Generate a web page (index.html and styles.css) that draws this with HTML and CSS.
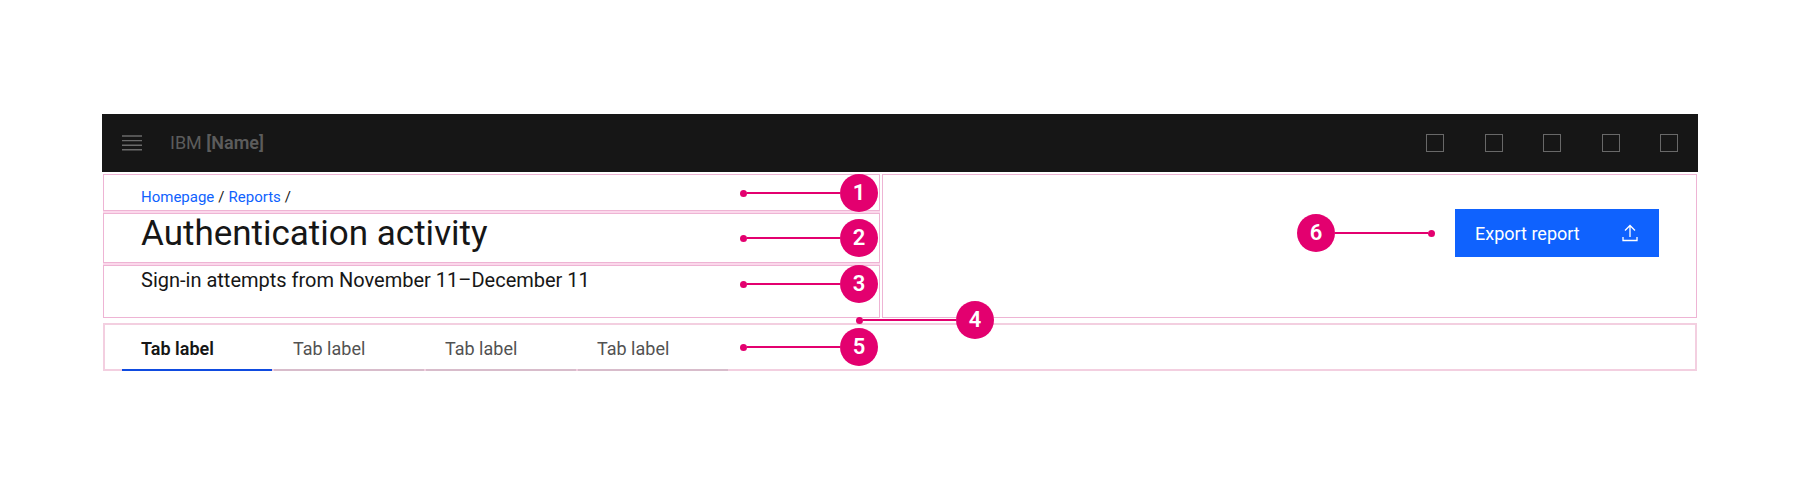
FILE: index.html
```
<!DOCTYPE html>
<html lang="en">
<head>
<meta charset="utf-8">
<title>Authentication activity</title>
<link rel="stylesheet" href="styles.css">
</head>
<body>
<main class="page">
  <header class="shell">
    <button class="menu" aria-label="Menu">
      <svg width="20" height="16" viewBox="0 0 20 16"><path d="M0 1h20M0 5.600h20M0 10.200h20M0 14.800h20" stroke="currentColor" stroke-width="1.400"/></svg>
    </button>
    <a class="brand" href="#">IBM <b>[Name]</b></a>
    <div class="actions">
      <button class="action" aria-label="Action 1"></button>
      <button class="action" aria-label="Action 2"></button>
      <button class="action" aria-label="Action 3"></button>
      <button class="action" aria-label="Action 4"></button>
      <button class="action" aria-label="Action 5"></button>
    </div>
  </header>

  <section class="top">
    <div class="left">
      <nav class="zone crumbs" aria-label="Breadcrumb">
        <a href="#">Homepage</a><span>/</span><a href="#">Reports</a><span>/</span>
        <div class="note"><i class="dot"></i><i class="line"></i><span class="num">1</span></div>
      </nav>
      <div class="zone title">
        <h1>Authentication activity</h1>
        <div class="note"><i class="dot"></i><i class="line"></i><span class="num">2</span></div>
      </div>
      <div class="zone desc">
        <p>Sign-in attempts from November 11–December 11</p>
        <div class="note"><i class="dot"></i><i class="line"></i><span class="num">3</span></div>
      </div>
    </div>
    <div class="zone right">
      <div class="note reverse"><i class="dot"></i><i class="line"></i><span class="num">6</span></div>
      <button class="export">Export report
        <svg width="18" height="18" viewBox="0 0 18 18"><path d="M9 13V1.500M4 6.500l5-5 5 5M2 13v3.500h14V13" fill="none" stroke="currentColor" stroke-width="1.300"/></svg>
      </button>
    </div>
  </section>

  <section class="zone tabs">
    <div class="tablist" role="tablist">
      <button class="tab selected" role="tab" aria-selected="true">Tab label</button>
      <button class="tab" role="tab" aria-selected="false">Tab label</button>
      <button class="tab" role="tab" aria-selected="false">Tab label</button>
      <button class="tab" role="tab" aria-selected="false">Tab label</button>
    </div>
    <div class="note tabs-note"><i class="dot"></i><i class="line"></i><span class="num">5</span></div>
    <div class="note gap-note"><i class="dot"></i><i class="line"></i><span class="num">4</span></div>
  </section>
</main>
</body>
</html>
```
FILE: styles.css
```
* { box-sizing: border-box; }
body {
  margin: 0;
  background: #fff;
  color: #161616;
  font-family: Roboto, "Noto Sans", sans-serif;
}
button { font: inherit; border: 0; padding: 0; background: none; }
a { text-decoration: none; }
svg { display: block; }

.page { padding: 114px 102px; }

.shell {
  display: flex;
  align-items: center;
  height: 58px;
  padding: 0 20px;
  background: #161616;
  color: #5c5c5c;
}
.menu { color: #6a6a6a; }
.brand { margin-left: 28px; color: inherit; font-size: 18px; line-height: 24px; }
.brand b { font-weight: 600; }
.actions {
  display: flex;
  justify-content: space-between;
  width: 252px;
  margin-left: auto;
}
.action { width: 18px; height: 18px; border: 1px solid #686868; }

.zone { position: relative; border: 1px solid #eeb4d4; }

.top {
  display: grid;
  grid-template-columns: 777fr 815fr;
  gap: 2px;
  margin: 2px 1px 0;
}
.left { display: grid; gap: 2px; background: #fbd8eb; }
.left .zone { padding-left: 37px; background: #fff; }

.crumbs {
  display: flex;
  gap: 4px;
  padding-top: 12px;
  height: 37px;
  font-size: 15px;
  line-height: 20px;
}
.crumbs a { color: #0f62fe; }
.title { height: 50px; }
.title h1 { margin: 0; font-size: 35px; font-weight: 400; line-height: 40px; }
.desc { height: 53px; }
.desc p { margin: 0; padding-top: 2px; font-size: 20px; line-height: 24px; }

.right {
  display: flex;
  justify-content: flex-end;
  align-items: flex-start;
  padding: 34px 37px 0 0;
}
.export {
  display: flex;
  justify-content: space-between;
  align-items: center;
  width: 204px;
  height: 48px;
  padding: 0 20px;
  background: #0f62fe;
  color: #fff;
  font-size: 18px;
}

.tabs { margin: 5px 1px 0; padding-left: 17px; border: 2px solid #f3cfe0; }
.tablist { display: flex; gap: 2px; height: 46px; margin-bottom: -2px; }
.tab {
  width: 150px;
  padding: 2px 19px 0;
  border-bottom: 2px solid #d8bccb;
  color: #525252;
  font-size: 18px;
  text-align: left;
}
.tab.selected {
  border-bottom-color: #0f4be0;
  color: #161616;
  font-weight: 600;
}

/* Numbered callouts that lie over the page regions */
.note {
  position: absolute;
  top: -1px;
  right: 1px;
  display: flex;
  align-items: center;
  width: 138px;
  color: #fff;
}
.title .note { top: 5px; }
.desc .note { top: -1px; }
.dot { width: 7px; height: 7px; border-radius: 50%; background: #e3006f; }
.line { flex: 1; height: 2px; background: #e3006f; }
.num {
  width: 38px;
  height: 38px;
  border-radius: 50%;
  background: #e3006f;
  font-size: 22px;
  font-weight: 600;
  line-height: 38px;
  text-align: center;
}
.reverse { position: static; flex-direction: row-reverse; margin: 5px 20px 0 0; }
.tabs-note { top: 3px; right: auto; left: 635px; }
.gap-note { top: -24px; right: auto; left: 751px; }
```
